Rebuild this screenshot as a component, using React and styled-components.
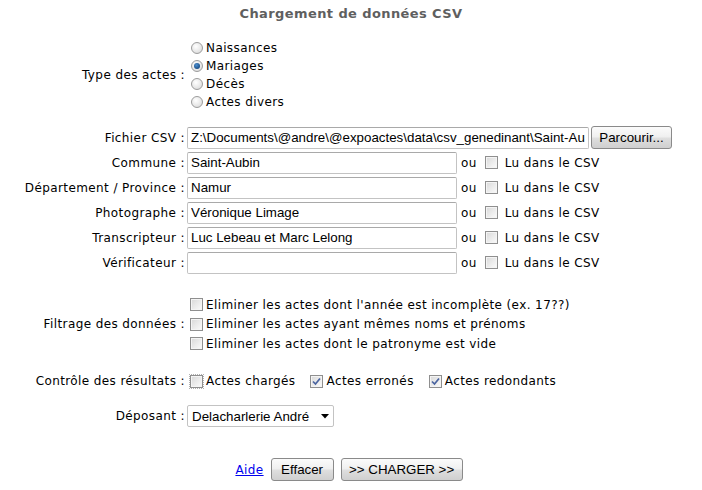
import React from "react";
import styled, { createGlobalStyle } from "styled-components";

const GlobalStyle = createGlobalStyle`
  body {
    margin: 0;
    background: #fff;
    font-family: "DejaVu Sans", Verdana, sans-serif;
    font-size: 12px;
    letter-spacing: 0.4px;
    color: #000;
  }
`;

const Page = styled.div`
  width: 702px;
  height: 490px;
  overflow: hidden;
`;

const Title = styled.h2`
  margin: 0;
  padding-top: 6px;
  height: 24px;
  text-align: center;
  font-size: 13px;
  font-weight: bold;
  color: #5f5f5f;
`;

const Row = styled.div`
  display: flex;
  align-items: center;
  margin-top: ${(p) => p.$top || 0}px;
  height: ${(p) => p.$h || 25}px;
`;

const Label = styled.div`
  width: 185px;
  flex: none;
  text-align: right;
  white-space: nowrap;
`;

const Value = styled.div`
  margin-left: ${(p) => p.$ml || 2}px;
  display: flex;
  flex-direction: ${(p) => (p.$col ? "column" : "row")};
  align-items: ${(p) => (p.$col ? "flex-start" : "center")};
`;

const Option = styled.label`
  display: flex;
  align-items: center;
  height: ${(p) => p.$h || 18}px;
  white-space: nowrap;
  margin-right: ${(p) => p.$mr || 0}px;
`;

const Radio = styled.span`
  width: 12px;
  height: 12px;
  border-radius: 50%;
  border: 1px solid #9c9c9c;
  background: radial-gradient(circle at 40% 35%, #fff 0%, #e6e6e6 60%, #cfcfcf 100%);
  box-sizing: border-box;
  margin: 0 3px 0 4px;
  display: flex;
  align-items: center;
  justify-content: center;
  &::after {
    content: "";
    display: ${(p) => (p.$on ? "block" : "none")};
    width: 6px;
    height: 6px;
    border-radius: 50%;
    background: radial-gradient(circle at 40% 35%, #4c8fd0 0%, #1b4f88 70%, #103b6b 100%);
  }
`;

const Box = styled.span`
  width: 13px;
  height: 13px;
  box-sizing: border-box;
  border: 1px solid #8f8f8f;
  background: linear-gradient(135deg, #d8d8d8 0%, #ececec 55%, #fbfbfb 100%);
  box-shadow: inset 0 0 0 1px #f4f4f4;
  margin: 0 ${(p) => p.$r || 3}px 0 ${(p) => p.$l || 3}px;
  display: flex;
  align-items: center;
  justify-content: center;
  flex: none;
  ${(p) => (p.$dotted ? "outline: 1px dotted #b0b0b0; outline-offset: 0px;" : "")}
`;

const Check = () => (
  <svg width="9" height="9" viewBox="0 0 9 9">
    <path d="M1 4.5 L3.5 7 L8 1.5" fill="none" stroke="#4a64a0" strokeWidth="1.7" />
  </svg>
);

const TextInput = styled.input`
  width: ${(p) => p.$w}px;
  height: 22px;
  box-sizing: border-box;
  border: 1px solid #c3c3c3;
  border-top-color: #a9a9a9;
  border-radius: 2px;
  background: #fff;
  font-family: "Liberation Sans", Arial, sans-serif;
  font-size: 13.333px;
  letter-spacing: 0;
  color: #000;
  padding: 0 3px;
  margin: 0;
  outline: none;
`;

const Button = styled.button`
  width: ${(p) => p.$w}px;
  height: 23px;
  box-sizing: border-box;
  border: 1px solid #8a8a8a;
  border-radius: 3px;
  background: linear-gradient(#fbfbfb 0%, #f0f0f0 45%, #dedede 55%, #cfcfcf 100%);
  font-family: "Liberation Sans", Arial, sans-serif;
  font-size: 13.333px;
  letter-spacing: 0;
  color: #000;
  padding: 0;
  margin-left: ${(p) => p.$ml || 0}px;
`;

const Ou = styled.span`
  margin: 0 4px 0 4px;
`;

const Select = styled.div`
  width: 147px;
  height: 22px;
  box-sizing: border-box;
  border: 1px solid #c3c3c3;
  border-radius: 2px;
  display: flex;
  align-items: center;
  justify-content: space-between;
  font-family: "Liberation Sans", Arial, sans-serif;
  font-size: 13.333px;
  letter-spacing: 0;
  padding: 0 4px 0 4px;
`;

const Footer = styled.div`
  display: flex;
  justify-content: center;
  align-items: center;
  margin-top: 30px;
  padding-right: 4px;
`;

const Link = styled.a`
  color: #0000ee;
  text-decoration: underline;
  margin-right: 7px;
  cursor: pointer;
`;

const csvFields = [
  ["Commune", "Saint-Aubin"],
  ["Département / Province", "Namur"],
  ["Photographe", "Véronique Limage"],
  ["Transcripteur", "Luc Lebeau et Marc Lelong"],
  ["Vérificateur", ""],
];

const filters = [
  "Eliminer les actes dont l'année est incomplète (ex. 17??)",
  "Eliminer les actes ayant mêmes noms et prénoms",
  "Eliminer les actes dont le patronyme est vide",
];

export default function App() {
  return (
    <Page>
      <GlobalStyle />
      <Title>Chargement de données CSV</Title>
      <Row $top={9} $h={72}>
        <Label>Type des actes :</Label>
        <Value $col>
          {["Naissances", "Mariages", "Décès", "Actes divers"].map((t) => (
            <Option key={t}>
              <Radio $on={t === "Mariages"} />
              {t}
            </Option>
          ))}
        </Value>
      </Row>
      <Row $top={14} $h={25}>
        <Label>Fichier CSV :</Label>
        <Value>
          <TextInput
            $w={402}
            readOnly
            value="Z:\Documents\@andre\@expoactes\data\csv_genedinant\Saint-Aubin.csv"
          />
          <Button $w={81} $ml={2}>Parcourir...</Button>
        </Value>
      </Row>
      {csvFields.map(([label, val]) => (
        <Row key={label} $h={25}>
          <Label>{label} :</Label>
          <Value>
            <TextInput $w={270} readOnly value={val} />
            <Ou>ou</Ou>
            <Box $l={4} $r={7} />
            Lu dans le CSV
          </Value>
        </Row>
      ))}
      <Row $top={19} $h={60}>
        <Label>Filtrage des données :</Label>
        <Value $col>
          {filters.map((f) => (
            <Option key={f} $h={19.5}>
              <Box />
              {f}
            </Option>
          ))}
        </Value>
      </Row>
      <Row $top={15} $h={24}>
        <Label>Contrôle des résultats :</Label>
        <Value>
          <Option $mr={12}>
            <Box $dotted />
            Actes chargés
          </Option>
          <Option $mr={12}>
            <Box>
              <Check />
            </Box>
            Actes erronés
          </Option>
          <Option>
            <Box>
              <Check />
            </Box>
            Actes redondants
          </Option>
        </Value>
      </Row>
      <Row $top={11} $h={24}>
        <Label>Déposant :</Label>
        <Value>
          <Select>
            Delacharlerie André
            <svg width="8" height="5" viewBox="0 0 8 5">
              <path d="M0 0 H8 L4 4.5 Z" fill="#000" />
            </svg>
          </Select>
        </Value>
      </Row>
      <Footer>
        <Link>Aide</Link>
        <Button $w={63}>Effacer</Button>
        <Button $w={122} $ml={7}>&gt;&gt; CHARGER &gt;&gt;</Button>
      </Footer>
    </Page>
  );
}
